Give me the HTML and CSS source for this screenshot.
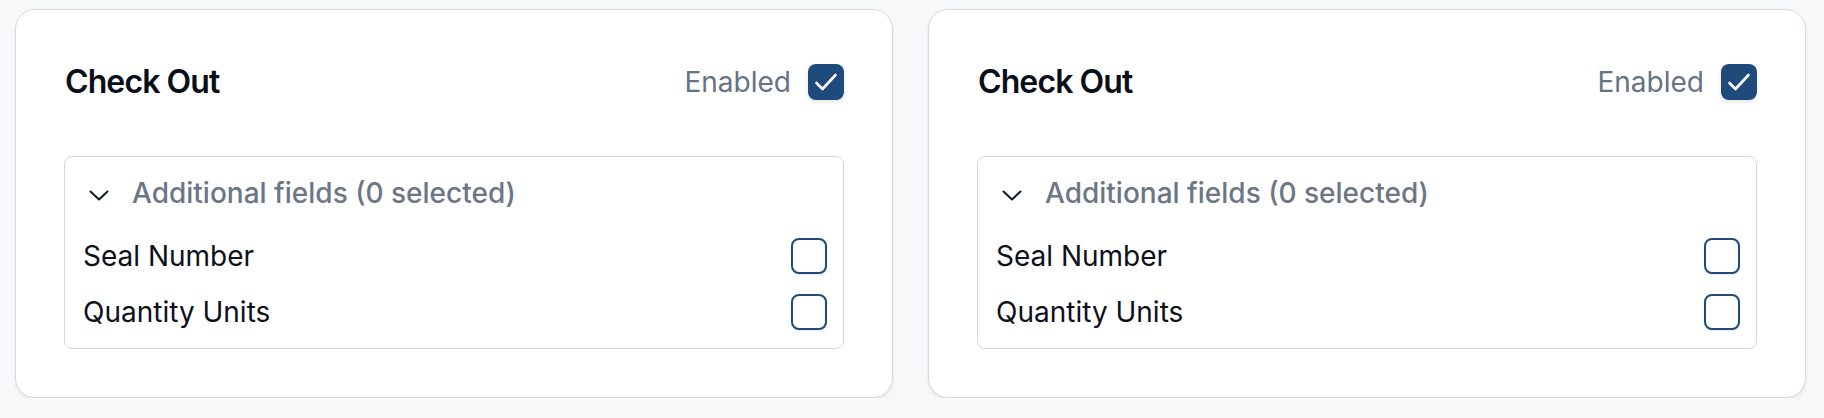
FILE: index.html
```html
<!DOCTYPE html>
<html lang="en">
<head>
<meta charset="utf-8">
<title>Check Out</title>
<link rel="stylesheet" href="styles.css">
</head>
<body>
<div class="page">
  <section class="card">
    <div class="card-header">
      <h2 class="card-title">Check Out</h2>
      <label class="toggle">
        <span class="toggle-label">Enabled</span>
        <span class="checkbox checked">
          <svg viewBox="0 0 36 36" width="36" height="36"><polyline points="8.5,19 14.5,25 27.5,11" fill="none" stroke="#fff" stroke-width="2.6" stroke-linecap="round" stroke-linejoin="round"/></svg>
        </span>
      </label>
    </div>
    <div class="fields">
      <div class="fields-header">
        <span class="chev"><svg viewBox="0 0 20 11" width="20" height="11"><polyline points="1.5,1.5 10,9.5 18.5,1.5" fill="none" stroke="#111827" stroke-width="2" stroke-linecap="round" stroke-linejoin="round"/></svg></span>
        <span class="fields-title">Additional fields (0 selected)</span>
      </div>
      <div class="field-list">
        <div class="field-row"><span class="field-label">Seal Number</span><span class="checkbox"></span></div>
        <div class="field-row"><span class="field-label">Quantity Units</span><span class="checkbox"></span></div>
      </div>
    </div>
  </section>
  <section class="card">
    <div class="card-header">
      <h2 class="card-title">Check Out</h2>
      <label class="toggle">
        <span class="toggle-label">Enabled</span>
        <span class="checkbox checked">
          <svg viewBox="0 0 36 36" width="36" height="36"><polyline points="8.5,19 14.5,25 27.5,11" fill="none" stroke="#fff" stroke-width="2.6" stroke-linecap="round" stroke-linejoin="round"/></svg>
        </span>
      </label>
    </div>
    <div class="fields">
      <div class="fields-header">
        <span class="chev"><svg viewBox="0 0 20 11" width="20" height="11"><polyline points="1.5,1.5 10,9.5 18.5,1.5" fill="none" stroke="#111827" stroke-width="2" stroke-linecap="round" stroke-linejoin="round"/></svg></span>
        <span class="fields-title">Additional fields (0 selected)</span>
      </div>
      <div class="field-list">
        <div class="field-row"><span class="field-label">Seal Number</span><span class="checkbox"></span></div>
        <div class="field-row"><span class="field-label">Quantity Units</span><span class="checkbox"></span></div>
      </div>
    </div>
  </section>
</div>
</body>
</html>
```
FILE: styles.css
```css
* { box-sizing: border-box; }
html, body { margin: 0; padding: 0; }
body {
  background: #f7f8fa;
  font-family: Inter, "Noto Sans", "Liberation Sans", sans-serif;
  color: #0c111b;
}
.page {
  display: grid;
  grid-template-columns: 1fr 1fr;
  gap: 35px;
  padding: 9px 18px 0 15px;
}
.card {
  background: #fff;
  border: 1px solid #d6dae0;
  border-radius: 20px;
  padding: 48px;
  box-shadow: 0 2px 3px rgba(16, 24, 40, 0.08);
}
.card-header {
  display: flex;
  justify-content: space-between;
  align-items: center;
  height: 48px;
}
.card-title {
  margin: 0;
  padding-left: 1px;
  font-size: 32px;
  line-height: 48px;
  font-weight: 600;
  letter-spacing: -0.9px;
  color: #0b0f19;
}
.toggle {
  display: flex;
  align-items: center;
  gap: 17px;
}
.toggle-label {
  font-size: 28px;
  line-height: 36px;
  color: #667384;
}
.checkbox {
  display: block;
  width: 36px;
  height: 36px;
  border: 2px solid #1f4a7c;
  border-radius: 8px;
  background: #fff;
  box-shadow: 0 1px 2px rgba(16, 24, 40, 0.1);
}
.checkbox.checked {
  background: #1f4a7c;
  border: none;
  box-shadow: 0 2px 4px rgba(16, 24, 40, 0.12);
}
.checkbox svg { display: block; }
.fields {
  margin-top: 50px;
  border: 1px solid #d4d8de;
  border-radius: 8px;
  padding: 16px 16px 8px 16px;
}
.fields-header {
  display: flex;
  align-items: center;
  gap: 15px;
  height: 40px;
}
.chev {
  width: 36px;
  height: 36px;
  display: flex;
  align-items: center;
  justify-content: center;
  padding-top: 4px;
}
.chev svg { display: block; }
.fields-title {
  font-size: 28px;
  line-height: 36px;
  font-weight: 500;
  color: #6b7686;
}
.field-list {
  margin-top: 15px;
}
.field-row {
  display: flex;
  justify-content: space-between;
  align-items: center;
  height: 56px;
}
.field-label {
  font-size: 28px;
  line-height: 36px;
  color: #0c111b;
  padding-left: 2px;
}
```
